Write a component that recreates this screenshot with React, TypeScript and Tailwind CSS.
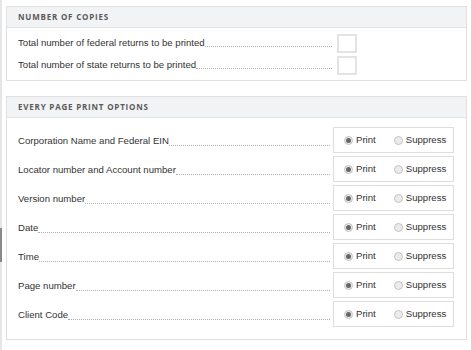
import { useState } from "react";

const printRows = [
  "Corporation Name and Federal EIN",
  "Locator number and Account number",
  "Version number",
  "Date",
  "Time",
  "Page number",
  "Client Code",
];

function Leader() {
  return <span className="flex-1 min-w-0 self-end mb-[3px] border-b border-dotted border-[#b0b0b0]"></span>;
}

function Radio({ checked, label, onClick }: { checked: boolean; label: string; onClick: () => void }) {
  return (
    <label className="flex items-center gap-[3px] cursor-pointer" onClick={onClick}>
      <span className="w-[9px] h-[9px] rounded-full border border-[#c3c3c3] bg-[#ebebeb] flex items-center justify-center">
        {checked && <span className="w-[5px] h-[5px] rounded-full bg-[#666]"></span>}
      </span>
      <span>{label}</span>
    </label>
  );
}

function PanelHeader({ title }: { title: string }) {
  return (
    <div className="h-[21px] bg-[#f2f3f5] border-b border-[#e2e3e5] flex items-center px-[11px]">
      <h2 className="text-[8px] font-bold tracking-[0.1em] text-[#5a5a5a]" style={{ fontFamily: "'Open Sans', sans-serif" }}>
        {title}
      </h2>
    </div>
  );
}

export default function App() {
  const [values, setValues] = useState<Record<string, string>>(
    Object.fromEntries(printRows.map((r) => [r, "print"]))
  );

  return (
    <div
      className="relative min-h-[350px] bg-white border-l-2 border-[#e6e6e6] pl-[4px] pr-[4px] pt-[6px] text-[9.6px] text-[#333]"
      style={{ fontFamily: "'Liberation Sans', Arial, sans-serif" }}
    >
      {/* scroll marker */}
      <div className="absolute left-[-2px] top-[228px] w-[2px] h-[34px] bg-[#8a8a8a]"></div>

      <section className="border border-[#e0e0e0]">
        <PanelHeader title="NUMBER OF COPIES" />
        <div className="pl-[11px] pt-[5px] pb-[5px] flex flex-col gap-[2px]">
          {["Total number of federal returns to be printed", "Total number of state returns to be printed"].map((t) => (
            <div key={t} className="flex items-center h-[20px]">
              <div className="flex w-[314px] min-w-0">
                <span className="whitespace-nowrap">{t}</span>
                <Leader />
              </div>
              <input className="ml-[5px] w-[20px] h-[19px] border-2 border-[#e3e3e3] outline-none" />
            </div>
          ))}
        </div>
      </section>

      <section className="mt-[15px] border border-[#e0e0e0]">
        <PanelHeader title="EVERY PAGE PRINT OPTIONS" />
        <div className="pl-[11px] pr-[12px] pt-[9px] pb-[12px] flex flex-col gap-[3px]">
          {printRows.map((r) => (
            <div key={r} className="flex items-center h-[26px]">
              <div className="flex flex-1 min-w-0 pt-[3px]">
                <span className="whitespace-nowrap">{r}</span>
                <Leader />
              </div>
              <div className="ml-[3px] w-[121px] h-[26px] border border-[#dedede] flex items-center pl-[10px] pt-[1px] gap-[18px]">
                <Radio checked={values[r] === "print"} label="Print" onClick={() => setValues({ ...values, [r]: "print" })} />
                <Radio checked={values[r] === "suppress"} label="Suppress" onClick={() => setValues({ ...values, [r]: "suppress" })} />
              </div>
            </div>
          ))}
        </div>
      </section>
    </div>
  );
}
